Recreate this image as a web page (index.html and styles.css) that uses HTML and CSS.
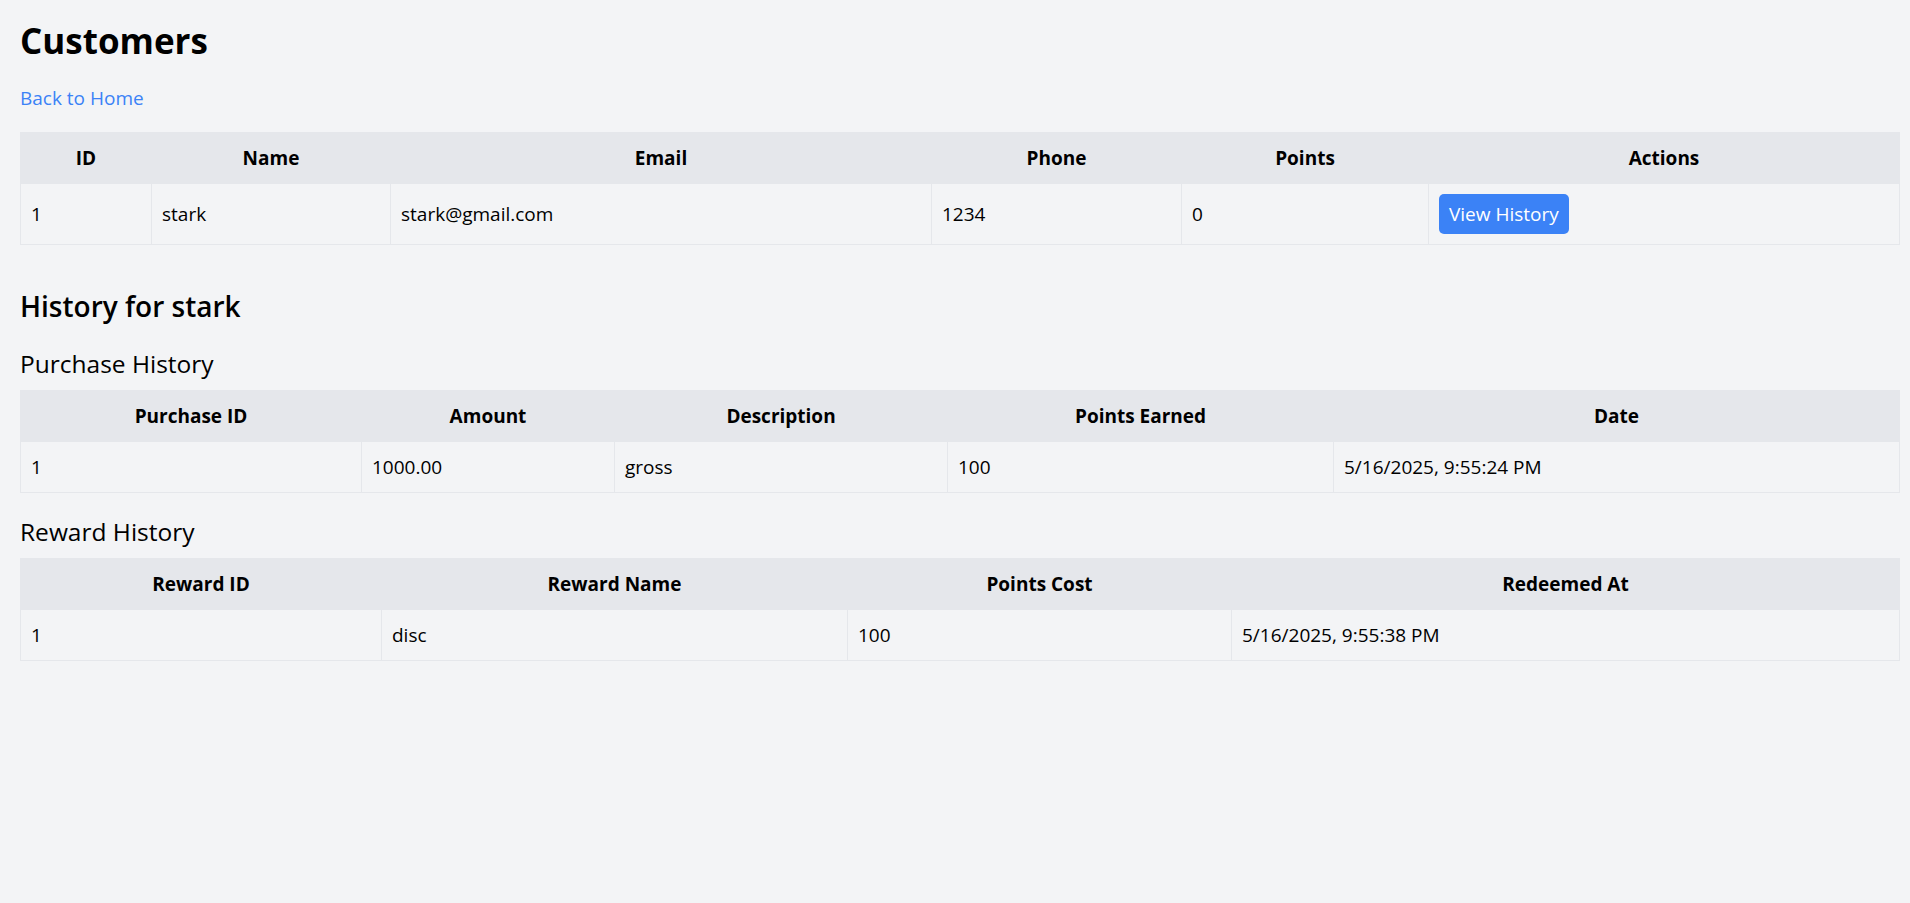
FILE: index.html
```html
<!DOCTYPE html>
<html lang="en">
<head>
<meta charset="utf-8">
<title>Customers</title>
<link rel="stylesheet" href="styles.css">
</head>
<body>
  <main class="page">
    <h1 class="title">Customers</h1>
    <p class="back"><a href="#" class="back-link">Back to Home</a></p>

    <table class="data-table">
      <colgroup>
        <col class="c-id"><col class="c-name"><col class="c-email"><col class="c-phone"><col class="c-points"><col>
      </colgroup>
      <thead>
        <tr><th>ID</th><th>Name</th><th>Email</th><th>Phone</th><th>Points</th><th>Actions</th></tr>
      </thead>
      <tbody>
        <tr>
          <td>1</td><td>stark</td><td>stark@gmail.com</td><td>1234</td><td>0</td>
          <td><button class="btn" type="button">View History</button></td>
        </tr>
      </tbody>
    </table>

    <h2 class="section-title">History for stark</h2>

    <h3 class="sub-title">Purchase History</h3>
    <table class="data-table">
      <colgroup>
        <col class="p-id"><col class="p-amount"><col class="p-desc"><col class="p-points"><col>
      </colgroup>
      <thead>
        <tr><th>Purchase ID</th><th>Amount</th><th>Description</th><th>Points Earned</th><th>Date</th></tr>
      </thead>
      <tbody>
        <tr><td>1</td><td>1000.00</td><td>gross</td><td>100</td><td>5/16/2025, 9:55:24 PM</td></tr>
      </tbody>
    </table>

    <h3 class="sub-title sub-title--spaced">Reward History</h3>
    <table class="data-table">
      <colgroup>
        <col class="r-id"><col class="r-name"><col class="r-cost"><col>
      </colgroup>
      <thead>
        <tr><th>Reward ID</th><th>Reward Name</th><th>Points Cost</th><th>Redeemed At</th></tr>
      </thead>
      <tbody>
        <tr><td>1</td><td>disc</td><td>100</td><td>5/16/2025, 9:55:38 PM</td></tr>
      </tbody>
    </table>
  </main>
</body>
</html>
```

FILE: styles.css
```css
* { box-sizing: border-box; }

html, body {
  margin: 0;
  background: #f3f4f6;
}

body {
  font-family: "Open Sans", "Noto Sans", sans-serif;
  font-size: 19px;
  line-height: 30px;
  color: #000;
  padding: 18px 10px 20px 20px;
}

.page {
  width: 1880px;
}

.title {
  margin: 0 0 20px;
  font-size: 35px;
  line-height: 45px;
  font-weight: 700;
}

.back {
  margin: 0 0 19px;
}

.back-link {
  color: #3b82f6;
  text-decoration: none;
}

.data-table {
  width: 1880px;
  table-layout: fixed;
  border-collapse: collapse;
  border: 1px solid #e5e7eb;
}

.data-table th,
.data-table td {
  border: 1px solid #e5e7eb;
  padding: 10px;
  white-space: nowrap;
}

.data-table th {
  background: #e5e7eb;
  font-weight: 700;
  text-align: center;
}

.data-table td {
  text-align: left;
}

.c-id { width: 131px; }
.c-name { width: 239px; }
.c-email { width: 541px; }
.c-phone { width: 250px; }
.c-points { width: 247px; }

.p-id { width: 341px; }
.p-amount { width: 253px; }
.p-desc { width: 333px; }
.p-points { width: 386px; }

.r-id { width: 361px; }
.r-name { width: 466px; }
.r-cost { width: 384px; }

.btn {
  display: inline-block;
  vertical-align: top;
  font: inherit;
  line-height: 30px;
  color: #fff;
  background: #3b82f6;
  border: 0;
  border-radius: 5px;
  padding: 5px 10px;
  cursor: pointer;
}

.section-title {
  margin: 41px 0 19px;
  font-size: 28px;
  line-height: 40px;
  font-weight: 600;
}

.sub-title {
  margin: 0 0 9px;
  padding-top: 1px;
  font-size: 24.5px;
  line-height: 35px;
  font-weight: 400;
}

.sub-title--spaced {
  margin-top: 19px;
  padding-top: 2px;
}
```
